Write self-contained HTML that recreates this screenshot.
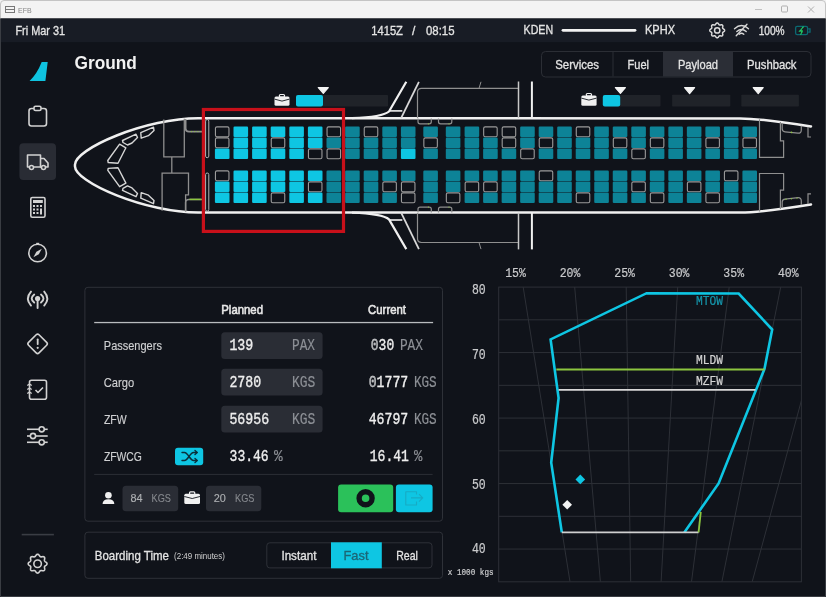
<!DOCTYPE html>
<html><head><meta charset="utf-8"><style>
html,body{margin:0;padding:0;background:#10131a;}
svg{display:block;}
</style></head><body>
<svg style="will-change:transform" width="826" height="597" viewBox="0 0 826 597">
<rect x="0" y="0" width="826" height="597" fill="#10131a"/>
<rect x="0" y="0" width="826" height="18.5" fill="#f3f3f3"/>
<rect x="1" y="18.5" width="824" height="23.7" fill="#181c25"/>
<path d="M0.5,18.5 V4 Q0.5,0.5 4,0.5 H822 Q825.5,0.5 825.5,4 V18.5" fill="none" stroke="#c4c4c4" stroke-width="1"/>
<path d="M0.5,18.5 V596.5 H825.5 V18.5" fill="none" stroke="#3a3d43" stroke-width="1"/>
<g stroke="#777" stroke-width="1" fill="none"><rect x="5.5" y="6.5" width="9" height="6"/><line x1="5.5" y1="9.5" x2="14.5" y2="9.5"/></g>
<text x="18" y="12.5" font-family="'Liberation Sans', sans-serif" font-size="7" font-weight="normal" fill="#888" text-anchor="start" >EFB</text>
<line x1="755" y1="9.5" x2="762" y2="9.5" stroke="#b4b4b4" stroke-width="0.8"/>
<rect x="781.5" y="6" width="6" height="6" fill="none" stroke="#a8a8a8" stroke-width="0.9" rx="1"/>
<path d="M808 6.5 L814 12.5 M814 6.5 L808 12.5" stroke="#a8a8a8" stroke-width="0.9"/>
<text x="15.4" y="34.5" font-family="'Liberation Sans', sans-serif" font-size="12.1" font-weight="normal" fill="#e4e4e4" stroke="#e4e4e4" stroke-width="0.3" text-anchor="start" textLength="49.8" lengthAdjust="spacingAndGlyphs" >Fri Mar 31</text>
<text x="371.3" y="34.6" font-family="'Liberation Sans', sans-serif" font-size="12.1" font-weight="normal" fill="#e4e4e4" stroke="#e4e4e4" stroke-width="0.3" text-anchor="start" textLength="31.6" lengthAdjust="spacingAndGlyphs" >1415Z</text>
<text x="412.0" y="34.6" font-family="'Liberation Sans', sans-serif" font-size="12.1" font-weight="normal" fill="#e4e4e4" stroke="#e4e4e4" stroke-width="0.3" text-anchor="start" >/</text>
<text x="426" y="34.6" font-family="'Liberation Sans', sans-serif" font-size="12.1" font-weight="normal" fill="#e4e4e4" stroke="#e4e4e4" stroke-width="0.3" text-anchor="start" textLength="28.5" lengthAdjust="spacingAndGlyphs" >08:15</text>
<text x="523.6" y="34.3" font-family="'Liberation Sans', sans-serif" font-size="12.1" font-weight="normal" fill="#e4e4e4" stroke="#e4e4e4" stroke-width="0.3" text-anchor="start" textLength="29.5" lengthAdjust="spacingAndGlyphs" >KDEN</text>
<line x1="563" y1="30.3" x2="635" y2="30.3" stroke="#f2f2f2" stroke-width="2.8" stroke-linecap="round"/>
<text x="645" y="34.3" font-family="'Liberation Sans', sans-serif" font-size="12.1" font-weight="normal" fill="#e4e4e4" stroke="#e4e4e4" stroke-width="0.3" text-anchor="start" textLength="30" lengthAdjust="spacingAndGlyphs" >KPHX</text>
<path d="M724.60,30.40 L724.57,30.69 L724.46,30.97 L724.28,31.24 L724.03,31.48 L723.73,31.70 L723.43,31.90 L723.16,32.08 L722.94,32.27 L722.78,32.46 L722.67,32.67 L722.60,32.89 L722.58,33.14 L722.60,33.43 L722.66,33.75 L722.74,34.10 L722.79,34.46 L722.80,34.81 L722.74,35.13 L722.61,35.40 L722.43,35.63 L722.20,35.81 L721.93,35.94 L721.61,36.00 L721.26,35.99 L720.90,35.94 L720.55,35.86 L720.23,35.80 L719.94,35.78 L719.69,35.80 L719.47,35.87 L719.26,35.98 L719.07,36.14 L718.88,36.36 L718.70,36.63 L718.50,36.93 L718.28,37.23 L718.04,37.48 L717.77,37.66 L717.49,37.77 L717.20,37.80 L716.91,37.77 L716.63,37.66 L716.36,37.48 L716.12,37.23 L715.90,36.93 L715.70,36.63 L715.52,36.36 L715.33,36.14 L715.14,35.98 L714.93,35.87 L714.71,35.80 L714.46,35.78 L714.17,35.80 L713.85,35.86 L713.50,35.94 L713.14,35.99 L712.79,36.00 L712.47,35.94 L712.20,35.81 L711.97,35.63 L711.79,35.40 L711.66,35.13 L711.60,34.81 L711.61,34.46 L711.66,34.10 L711.74,33.75 L711.80,33.43 L711.82,33.14 L711.80,32.89 L711.73,32.67 L711.62,32.46 L711.46,32.27 L711.24,32.08 L710.97,31.90 L710.67,31.70 L710.37,31.48 L710.12,31.24 L709.94,30.97 L709.83,30.69 L709.80,30.40 L709.83,30.11 L709.94,29.83 L710.12,29.56 L710.37,29.32 L710.67,29.10 L710.97,28.90 L711.24,28.72 L711.46,28.53 L711.62,28.34 L711.73,28.13 L711.80,27.91 L711.82,27.66 L711.80,27.37 L711.74,27.05 L711.66,26.70 L711.61,26.34 L711.60,25.99 L711.66,25.67 L711.79,25.40 L711.97,25.17 L712.20,24.99 L712.47,24.86 L712.79,24.80 L713.14,24.81 L713.50,24.86 L713.85,24.94 L714.17,25.00 L714.46,25.02 L714.71,25.00 L714.93,24.93 L715.14,24.82 L715.33,24.66 L715.52,24.44 L715.70,24.17 L715.90,23.87 L716.12,23.57 L716.36,23.32 L716.63,23.14 L716.91,23.03 L717.20,23.00 L717.49,23.03 L717.77,23.14 L718.04,23.32 L718.28,23.57 L718.50,23.87 L718.70,24.17 L718.88,24.44 L719.07,24.66 L719.26,24.82 L719.47,24.93 L719.69,25.00 L719.94,25.02 L720.23,25.00 L720.55,24.94 L720.90,24.86 L721.26,24.81 L721.61,24.80 L721.93,24.86 L722.20,24.99 L722.43,25.17 L722.61,25.40 L722.74,25.67 L722.80,25.99 L722.79,26.34 L722.74,26.70 L722.66,27.05 L722.60,27.37 L722.58,27.66 L722.60,27.91 L722.67,28.13 L722.78,28.34 L722.94,28.53 L723.16,28.72 L723.43,28.90 L723.73,29.10 L724.03,29.32 L724.28,29.56 L724.46,29.83 L724.57,30.11Z" fill="none" stroke="#dcdcdc" stroke-width="1.5" stroke-linejoin="round"/>
<circle cx="717.2" cy="30.4" r="2.66" fill="none" stroke="#dcdcdc" stroke-width="1.5"/>
<g fill="none" stroke="#d8d8d8" stroke-width="1.35" stroke-linecap="round"><path d="M734.5,28.8 Q741.5,22.3 748.5,28.8"/><path d="M736.8,31.6 Q741.5,27.4 746.2,31.6"/><path d="M739.2,34.3 Q741.5,32.2 743.8,34.3"/><line x1="736.2" y1="35.8" x2="747" y2="24.3"/></g>
<text x="758.7" y="34.6" font-family="'Liberation Sans', sans-serif" font-size="12.1" font-weight="normal" fill="#e4e4e4" stroke="#e4e4e4" stroke-width="0.3" text-anchor="start" textLength="25.9" lengthAdjust="spacingAndGlyphs" >100%</text>
<g fill="none" stroke="#0b6a73" stroke-width="1.3"><rect x="795.6" y="26.3" width="12" height="8.4" rx="1.6"/><path d="M808.2,28.8 h1.8 v3.4 h-1.8"/></g>
<path d="M803.2,27 L799.8,31 L802.5,31 L800.8,34.2" stroke="#1fcf63" stroke-width="1.3" fill="none" stroke-linecap="round" stroke-dasharray="1.2 1"/>
<path d="M41.7,62 L47.7,62 L45.4,80.9 L29.6,80.9 Q37,74 41.7,62 Z" fill="#0fc3e0"/>
<g fill="none" stroke="#d2d2d2" stroke-width="1.6" stroke-linejoin="round"><rect x="29" y="108.5" width="17.5" height="17.5" rx="2.5"/><rect x="34" y="106.3" width="7" height="4.2" rx="1.5" fill="#10131a"/></g>
<rect x="19.4" y="143.3" width="36.6" height="36.7" rx="4" fill="#292c34"/>
<g fill="none" stroke="#d2d2d2" stroke-width="1.6" stroke-linejoin="round"><path d="M27.5 155 h13 v12 h-13 z"/><path d="M40.5 158.5 h3.5 l4 4.5 v4 h-8"/><circle cx="31.5" cy="167.5" r="2" fill="#292c34"/><circle cx="43.5" cy="167.5" r="2" fill="#292c34"/></g>
<g fill="none" stroke="#d2d2d2" stroke-width="1.6"><rect x="30.8" y="197.5" width="14.2" height="19.7" rx="1.5"/></g>
<g fill="#d2d2d2"><rect x="33" y="200" width="9.8" height="3"/><rect x="33" y="205" width="2" height="2"/><rect x="36.5" y="205" width="2" height="2"/><rect x="40" y="205" width="2" height="2"/><rect x="33" y="208.5" width="2" height="2"/><rect x="36.5" y="208.5" width="2" height="2"/><rect x="40" y="208.5" width="2" height="6"/><rect x="33" y="212" width="2" height="2"/><rect x="36.5" y="212" width="2" height="2"/></g>
<circle cx="37.6" cy="253" r="8.8" fill="none" stroke="#d2d2d2" stroke-width="1.6"/>
<path d="M41.8 248.8 L38.8 254.2 L33.4 257.2 L36.4 251.8 Z" fill="#d2d2d2"/>
<rect x="36.2" y="242.8" width="3" height="1.5" fill="#d2d2d2"/>
<g fill="none" stroke="#d2d2d2" stroke-width="1.9" stroke-linecap="round"><path d="M31,291.6 Q24.8,298.6 31,305.6"/><path d="M44.2,291.6 Q50.4,298.6 44.2,305.6"/><path d="M34.2,294.6 Q29.2,298.6 34.2,302.6"/><path d="M41,294.6 Q46,298.6 41,302.6"/><line x1="37.6" y1="300" x2="37.6" y2="308"/></g><circle cx="37.6" cy="298.6" r="2.6" fill="#d2d2d2"/>
<rect x="30.2" y="336.4" width="14.8" height="14.8" rx="2" transform="rotate(45 37.6 343.8)" fill="none" stroke="#d2d2d2" stroke-width="1.6"/>
<rect x="36.8" y="338.5" width="1.8" height="6.5" rx="0.8" fill="#d2d2d2"/><circle cx="37.7" cy="347.8" r="1.1" fill="#d2d2d2"/>
<g fill="none" stroke="#d2d2d2" stroke-width="1.6" stroke-linejoin="round"><rect x="29.5" y="380.3" width="17" height="19" rx="2"/><path d="M35.5 390 l2.5 2.5 l5 -5"/></g>
<g stroke="#d2d2d2" stroke-width="1.4" fill="none"><path d="M27.3 385.5 l2.2 -1.5 l2.2 1.5"/><path d="M27.3 389.5 l2.2 -1.5 l2.2 1.5"/><path d="M27.3 393.5 l2.2 -1.5 l2.2 1.5"/></g>
<g stroke="#d2d2d2" stroke-width="1.6" fill="none"><line x1="27" y1="429.3" x2="47.7" y2="429.3"/><line x1="27" y1="436" x2="47.7" y2="436"/><line x1="27" y1="442.3" x2="47.7" y2="442.3"/></g>
<g stroke="#d2d2d2" stroke-width="1.6" fill="#10131a"><circle cx="41.7" cy="429.3" r="2.6"/><circle cx="33" cy="436" r="2.6"/><circle cx="41.7" cy="442.3" r="2.6"/></g>
<rect x="21.7" y="533.8" width="32.2" height="1.6" fill="#3a3d44"/>
<path d="M47.00,563.70 L46.96,564.07 L46.82,564.43 L46.59,564.76 L46.27,565.07 L45.90,565.35 L45.51,565.60 L45.17,565.84 L44.90,566.07 L44.69,566.32 L44.55,566.58 L44.46,566.86 L44.44,567.18 L44.46,567.54 L44.54,567.95 L44.63,568.40 L44.70,568.86 L44.71,569.30 L44.63,569.71 L44.48,570.06 L44.25,570.35 L43.96,570.58 L43.61,570.73 L43.20,570.81 L42.76,570.80 L42.30,570.73 L41.85,570.64 L41.44,570.56 L41.08,570.54 L40.76,570.56 L40.48,570.65 L40.22,570.79 L39.97,571.00 L39.74,571.27 L39.50,571.61 L39.25,572.00 L38.97,572.37 L38.66,572.69 L38.33,572.92 L37.97,573.06 L37.60,573.10 L37.23,573.06 L36.87,572.92 L36.54,572.69 L36.23,572.37 L35.95,572.00 L35.70,571.61 L35.46,571.27 L35.23,571.00 L34.98,570.79 L34.72,570.65 L34.44,570.56 L34.12,570.54 L33.76,570.56 L33.35,570.64 L32.90,570.73 L32.44,570.80 L32.00,570.81 L31.59,570.73 L31.24,570.58 L30.95,570.35 L30.72,570.06 L30.57,569.71 L30.49,569.30 L30.50,568.86 L30.57,568.40 L30.66,567.95 L30.74,567.54 L30.76,567.18 L30.74,566.86 L30.65,566.58 L30.51,566.32 L30.30,566.07 L30.03,565.84 L29.69,565.60 L29.30,565.35 L28.93,565.07 L28.61,564.76 L28.38,564.43 L28.24,564.07 L28.20,563.70 L28.24,563.33 L28.38,562.97 L28.61,562.64 L28.93,562.33 L29.30,562.05 L29.69,561.80 L30.03,561.56 L30.30,561.33 L30.51,561.08 L30.65,560.82 L30.74,560.54 L30.76,560.22 L30.74,559.86 L30.66,559.45 L30.57,559.00 L30.50,558.54 L30.49,558.10 L30.57,557.69 L30.72,557.34 L30.95,557.05 L31.24,556.82 L31.59,556.67 L32.00,556.59 L32.44,556.60 L32.90,556.67 L33.35,556.76 L33.76,556.84 L34.12,556.86 L34.44,556.84 L34.72,556.75 L34.98,556.61 L35.23,556.40 L35.46,556.13 L35.70,555.79 L35.95,555.40 L36.23,555.03 L36.54,554.71 L36.87,554.48 L37.23,554.34 L37.60,554.30 L37.97,554.34 L38.33,554.48 L38.66,554.71 L38.97,555.03 L39.25,555.40 L39.50,555.79 L39.74,556.13 L39.97,556.40 L40.22,556.61 L40.48,556.75 L40.76,556.84 L41.08,556.86 L41.44,556.84 L41.85,556.76 L42.30,556.67 L42.76,556.60 L43.20,556.59 L43.61,556.67 L43.96,556.82 L44.25,557.05 L44.48,557.34 L44.63,557.69 L44.71,558.10 L44.70,558.54 L44.63,559.00 L44.54,559.45 L44.46,559.86 L44.44,560.22 L44.46,560.54 L44.55,560.82 L44.69,561.08 L44.90,561.33 L45.17,561.56 L45.51,561.80 L45.90,562.05 L46.27,562.33 L46.59,562.64 L46.82,562.97 L46.96,563.33Z" fill="none" stroke="#d2d2d2" stroke-width="1.6" stroke-linejoin="round"/>
<circle cx="37.6" cy="563.7" r="3.76" fill="none" stroke="#d2d2d2" stroke-width="1.6"/>
<text x="74.5" y="68.6" font-family="'Liberation Sans', sans-serif" font-size="18" font-weight="bold" fill="#f2f2f2" text-anchor="start" textLength="62.4" lengthAdjust="spacingAndGlyphs" >Ground</text>
<rect x="541.5" y="51.5" width="269.5" height="25.5" rx="4" fill="none" stroke="#2b2e35" stroke-width="1"/>
<rect x="663" y="52" width="70" height="24.5" fill="#2b2e36"/>
<line x1="613" y1="52" x2="613" y2="76.5" stroke="#2b2e35" stroke-width="1"/>
<text x="555.2" y="68.7" font-family="'Liberation Sans', sans-serif" font-size="12.2" font-weight="normal" fill="#e3e3e3" stroke="#e3e3e3" stroke-width="0.3" text-anchor="start" textLength="43.8" lengthAdjust="spacingAndGlyphs" >Services</text>
<text x="627.5" y="68.7" font-family="'Liberation Sans', sans-serif" font-size="12.2" font-weight="normal" fill="#e3e3e3" stroke="#e3e3e3" stroke-width="0.3" text-anchor="start" textLength="21.5" lengthAdjust="spacingAndGlyphs" >Fuel</text>
<text x="677.9" y="68.7" font-family="'Liberation Sans', sans-serif" font-size="12.2" font-weight="normal" fill="#e3e3e3" stroke="#e3e3e3" stroke-width="0.3" text-anchor="start" textLength="40.1" lengthAdjust="spacingAndGlyphs" >Payload</text>
<text x="747" y="68.7" font-family="'Liberation Sans', sans-serif" font-size="12.2" font-weight="normal" fill="#e3e3e3" stroke="#e3e3e3" stroke-width="0.3" text-anchor="start" textLength="49.5" lengthAdjust="spacingAndGlyphs" >Pushback</text>
<path d="M811,126.4 Q762,118.5 740,118.4 L200,118.3 C146.6,117.6 73,149.2 75,165.45 C73,181.7 146.6,213.3 200,212.6 L740,212.5 Q762,212.4 811,204.5" fill="none" stroke="#f0f0f0" stroke-width="2.5" stroke-linecap="round"/>
<path d="M140.8,132.7 L153.5,127.2 L154,130.5 L148.4,135.7 L141.2,138.2Z" fill="none" stroke="#d6d6d6" stroke-width="1.4" stroke-linejoin="round"/>
<path d="M140.8,198.20 L153.5,203.70 L154,200.40 L148.4,195.20 L141.2,192.70Z" fill="none" stroke="#d6d6d6" stroke-width="1.4" stroke-linejoin="round"/>
<path d="M122.5,140.5 L136,134.2 L137.5,137.5 L132,143 L127.5,145 L123,142.5Z" fill="none" stroke="#d6d6d6" stroke-width="1.4" stroke-linejoin="round"/>
<path d="M122.5,190.40 L136,196.70 L137.5,193.40 L132,187.90 L127.5,185.90 L123,188.40Z" fill="none" stroke="#d6d6d6" stroke-width="1.4" stroke-linejoin="round"/>
<path d="M119.6,144.2 L125.9,147.8 L118,163.2 L108.2,162.5 L107.8,160.5Z" fill="none" stroke="#d6d6d6" stroke-width="1.4" stroke-linejoin="round"/>
<path d="M119.6,186.70 L125.9,183.10 L118,167.70 L108.2,168.40 L107.8,170.40Z" fill="none" stroke="#d6d6d6" stroke-width="1.4" stroke-linejoin="round"/>
<g fill="none" stroke="#8f8f8f" stroke-width="1.3"><path d="M163.8,119.5 V156.9 H184.3 V118.8"/><line x1="171.8" y1="156.9" x2="171.8" y2="173.1"/><path d="M162.1,210.8 V173.1 H188.5 V194.8 H185.6 V211.6"/></g>
<path d="M185.6,119 V128.5 Q185.6,131.6 189,131.6 H202" fill="none" stroke="#8f8f8f" stroke-width="1.8"/>
<line x1="191" y1="131.6" x2="201" y2="131.6" stroke="#8cc63f" stroke-width="1" stroke-dasharray="1 2.2"/>
<path d="M185.6,211.5 V202.5 Q185.6,199.4 189,199.4 H202" fill="none" stroke="#8f8f8f" stroke-width="1.5"/>
<line x1="189.5" y1="199.4" x2="201.5" y2="199.4" stroke="#8cc63f" stroke-width="1.5"/>
<rect x="205.6" y="119.5" width="3.2" height="38.2" rx="1.6" fill="none" stroke="#b5b5b5" stroke-width="1"/>
<rect x="205.6" y="173" width="3.2" height="38.2" rx="1.6" fill="none" stroke="#b5b5b5" stroke-width="1"/>
<path d="M352,118.2 C370,117.5 385,115 389,111.5 L406.3,81.8" fill="none" stroke="#f0f0f0" stroke-width="2.2" stroke-linejoin="round"/>
<line x1="389" y1="110.9" x2="402.3" y2="110.9" stroke="#f0f0f0" stroke-width="1.6"/>
<line x1="401.1" y1="118.2" x2="418.9" y2="81.8" stroke="#d8d8d8" stroke-width="1.8"/>
<path d="M417.5,118 V92.3 Q417.5,88.4 421.5,88.4 H518.5" fill="none" stroke="#8f8f8f" stroke-width="1.2"/>
<line x1="479" y1="88.4" x2="481" y2="81.8" stroke="#8f8f8f" stroke-width="1"/>
<line x1="518.5" y1="81.5" x2="518.5" y2="118.2" stroke="#c8c8c8" stroke-width="1.5"/>
<line x1="531.9" y1="81.5" x2="531.9" y2="118.2" stroke="#f0f0f0" stroke-width="2"/>
<path d="M418,118.5 V121.80 Q418,123.8 420,123.8 H429.3 Q431.3,123.8 431.3,121.80 V118.5" fill="none" stroke="#8f8f8f" stroke-width="1.2" stroke-linejoin="round"/>
<circle cx="428.5" cy="123.8" r="0.6" fill="#8cc63f"/>
<path d="M438.5,118.5 V121.80 Q438.5,123.8 440.5,123.8 H449.8 Q451.8,123.8 451.8,121.80 V118.5" fill="none" stroke="#8f8f8f" stroke-width="1.2" stroke-linejoin="round"/>
<circle cx="449.0" cy="123.8" r="0.6" fill="#8cc63f"/>
<path d="M352,212.7 C370,213.39999999999998 385,215.89999999999998 389,219.39999999999998 L406.3,249.09999999999997" fill="none" stroke="#f0f0f0" stroke-width="2.2" stroke-linejoin="round"/>
<line x1="389" y1="219.99999999999997" x2="402.3" y2="219.99999999999997" stroke="#f0f0f0" stroke-width="1.6"/>
<line x1="401.1" y1="212.7" x2="418.9" y2="249.09999999999997" stroke="#d8d8d8" stroke-width="1.8"/>
<path d="M417.5,212.89999999999998 V238.59999999999997 Q417.5,242.49999999999997 421.5,242.49999999999997 H518.5" fill="none" stroke="#8f8f8f" stroke-width="1.2"/>
<line x1="479" y1="242.49999999999997" x2="481" y2="249.09999999999997" stroke="#8f8f8f" stroke-width="1"/>
<line x1="518.5" y1="249.39999999999998" x2="518.5" y2="212.7" stroke="#c8c8c8" stroke-width="1.5"/>
<line x1="531.9" y1="249.39999999999998" x2="531.9" y2="212.7" stroke="#f0f0f0" stroke-width="2"/>
<path d="M418,212.39999999999998 V209.10 Q418,207.09999999999997 420,207.09999999999997 H429.3 Q431.3,207.09999999999997 431.3,209.10 V212.39999999999998" fill="none" stroke="#8f8f8f" stroke-width="1.2" stroke-linejoin="round"/>
<circle cx="428.5" cy="207.09999999999997" r="0.6" fill="#8cc63f"/>
<path d="M438.5,212.39999999999998 V209.10 Q438.5,207.09999999999997 440.5,207.09999999999997 H449.8 Q451.8,207.09999999999997 451.8,209.10 V212.39999999999998" fill="none" stroke="#8f8f8f" stroke-width="1.2" stroke-linejoin="round"/>
<circle cx="449.0" cy="207.09999999999997" r="0.6" fill="#8cc63f"/>
<g fill="none" stroke="#8f8f8f" stroke-width="1.2"><path d="M759.5,119.3 V157.4 H783.6 V140.8 H780.4 V122"/><path d="M759.5,211.6 V173.5 H783.6 V190.1 H780.4 V208.9"/><path d="M782.2,123 V129 Q782.2,131.5 785,131.8 L798,133.2 Q801.3,133.3 801.3,130 V125.8"/><path d="M782.2,207.9 V201.9 Q782.2,199.4 785,199.1 L798,197.7 Q801.3,197.6 801.3,200.9 V205.1"/><path d="M808,127 V137 H811"/><path d="M808,203.9 V193.9 H811"/></g>
<circle cx="791.5" cy="132.4" r="0.8" fill="#8cc63f"/>
<g fill="#8cc63f"><circle cx="786" cy="199.3" r="0.7"/><circle cx="791.5" cy="198.7" r="0.7"/><circle cx="797" cy="198.1" r="0.7"/></g>
<rect x="215.45" y="126.85" width="13.5" height="9.9" rx="1.5" fill="none" stroke="#9b9b9b" stroke-width="1.1"/>
<rect x="215.45" y="137.85" width="13.5" height="9.9" rx="1.5" fill="none" stroke="#9b9b9b" stroke-width="1.1"/>
<rect x="214.90" y="148.55" width="14.6" height="10.5" rx="1.1" fill="#0ec6e3"/>
<rect x="215.45" y="170.85" width="13.5" height="9.9" rx="1.5" fill="none" stroke="#9b9b9b" stroke-width="1.1"/>
<rect x="214.90" y="181.55" width="14.6" height="10.5" rx="1.1" fill="#0ec6e3"/>
<rect x="214.90" y="192.55" width="14.6" height="10.5" rx="1.1" fill="#0ec6e3"/>
<rect x="233.50" y="126.55" width="14.6" height="10.5" rx="1.1" fill="#0ec6e3"/>
<rect x="233.50" y="137.55" width="14.6" height="10.5" rx="1.1" fill="#0ec6e3"/>
<rect x="233.50" y="148.55" width="14.6" height="10.5" rx="1.1" fill="#0ec6e3"/>
<rect x="233.50" y="170.55" width="14.6" height="10.5" rx="1.1" fill="#0ec6e3"/>
<rect x="233.50" y="181.55" width="14.6" height="10.5" rx="1.1" fill="#0ec6e3"/>
<rect x="233.50" y="192.55" width="14.6" height="10.5" rx="1.1" fill="#0ec6e3"/>
<rect x="252.10" y="126.55" width="14.6" height="10.5" rx="1.1" fill="#0ec6e3"/>
<rect x="252.10" y="137.55" width="14.6" height="10.5" rx="1.1" fill="#0ec6e3"/>
<rect x="252.10" y="148.55" width="14.6" height="10.5" rx="1.1" fill="#0ec6e3"/>
<rect x="252.10" y="170.55" width="14.6" height="10.5" rx="1.1" fill="#0ec6e3"/>
<rect x="252.10" y="181.55" width="14.6" height="10.5" rx="1.1" fill="#0ec6e3"/>
<rect x="252.10" y="192.55" width="14.6" height="10.5" rx="1.1" fill="#0ec6e3"/>
<rect x="270.70" y="126.55" width="14.6" height="10.5" rx="1.1" fill="#0ec6e3"/>
<rect x="271.25" y="137.85" width="13.5" height="9.9" rx="1.5" fill="none" stroke="#9b9b9b" stroke-width="1.1"/>
<rect x="270.70" y="148.55" width="14.6" height="10.5" rx="1.1" fill="#0ec6e3"/>
<rect x="270.70" y="170.55" width="14.6" height="10.5" rx="1.1" fill="#0ec6e3"/>
<rect x="270.70" y="181.55" width="14.6" height="10.5" rx="1.1" fill="#0ec6e3"/>
<rect x="271.25" y="192.85" width="13.5" height="9.9" rx="1.5" fill="none" stroke="#9b9b9b" stroke-width="1.1"/>
<rect x="289.30" y="126.55" width="14.6" height="10.5" rx="1.1" fill="#0ec6e3"/>
<rect x="289.30" y="137.55" width="14.6" height="10.5" rx="1.1" fill="#0ec6e3"/>
<rect x="289.30" y="148.55" width="14.6" height="10.5" rx="1.1" fill="#0ec6e3"/>
<rect x="289.30" y="170.55" width="14.6" height="10.5" rx="1.1" fill="#0ec6e3"/>
<rect x="289.30" y="181.55" width="14.6" height="10.5" rx="1.1" fill="#0ec6e3"/>
<rect x="289.30" y="192.55" width="14.6" height="10.5" rx="1.1" fill="#0ec6e3"/>
<rect x="307.90" y="126.55" width="14.6" height="10.5" rx="1.1" fill="#0ec6e3"/>
<rect x="307.90" y="137.55" width="14.6" height="10.5" rx="1.1" fill="#0ec6e3"/>
<rect x="308.45" y="148.85" width="13.5" height="9.9" rx="1.5" fill="none" stroke="#9b9b9b" stroke-width="1.1"/>
<rect x="307.90" y="170.55" width="14.6" height="10.5" rx="1.1" fill="#0ec6e3"/>
<rect x="308.45" y="181.85" width="13.5" height="9.9" rx="1.5" fill="none" stroke="#9b9b9b" stroke-width="1.1"/>
<rect x="307.90" y="192.55" width="14.6" height="10.5" rx="1.1" fill="#0ec6e3"/>
<rect x="327.05" y="126.85" width="13.5" height="9.9" rx="1.5" fill="none" stroke="#9b9b9b" stroke-width="1.1"/>
<rect x="326.50" y="137.55" width="14.6" height="10.5" rx="1.1" fill="#0d8397"/>
<rect x="327.05" y="148.85" width="13.5" height="9.9" rx="1.5" fill="none" stroke="#9b9b9b" stroke-width="1.1"/>
<rect x="326.50" y="170.55" width="14.6" height="10.5" rx="1.1" fill="#0d8397"/>
<rect x="326.50" y="181.55" width="14.6" height="10.5" rx="1.1" fill="#0d8397"/>
<rect x="326.50" y="192.55" width="14.6" height="10.5" rx="1.1" fill="#0d8397"/>
<rect x="345.10" y="126.55" width="14.6" height="10.5" rx="1.1" fill="#0d8397"/>
<rect x="345.10" y="137.55" width="14.6" height="10.5" rx="1.1" fill="#0d8397"/>
<rect x="345.10" y="148.55" width="14.6" height="10.5" rx="1.1" fill="#0d8397"/>
<rect x="345.10" y="170.55" width="14.6" height="10.5" rx="1.1" fill="#0d8397"/>
<rect x="345.10" y="181.55" width="14.6" height="10.5" rx="1.1" fill="#0d8397"/>
<rect x="345.10" y="192.55" width="14.6" height="10.5" rx="1.1" fill="#0d8397"/>
<rect x="364.25" y="126.85" width="13.5" height="9.9" rx="1.5" fill="none" stroke="#9b9b9b" stroke-width="1.1"/>
<rect x="363.70" y="137.55" width="14.6" height="10.5" rx="1.1" fill="#0d8397"/>
<rect x="363.70" y="148.55" width="14.6" height="10.5" rx="1.1" fill="#0d8397"/>
<rect x="363.70" y="170.55" width="14.6" height="10.5" rx="1.1" fill="#0d8397"/>
<rect x="363.70" y="181.55" width="14.6" height="10.5" rx="1.1" fill="#0d8397"/>
<rect x="363.70" y="192.55" width="14.6" height="10.5" rx="1.1" fill="#0d8397"/>
<rect x="382.30" y="126.55" width="14.6" height="10.5" rx="1.1" fill="#0d8397"/>
<rect x="382.30" y="137.55" width="14.6" height="10.5" rx="1.1" fill="#0d8397"/>
<rect x="382.30" y="148.55" width="14.6" height="10.5" rx="1.1" fill="#0d8397"/>
<rect x="382.30" y="170.55" width="14.6" height="10.5" rx="1.1" fill="#0d8397"/>
<rect x="382.85" y="181.85" width="13.5" height="9.9" rx="1.5" fill="none" stroke="#9b9b9b" stroke-width="1.1"/>
<rect x="382.30" y="192.55" width="14.6" height="10.5" rx="1.1" fill="#0d8397"/>
<rect x="400.90" y="126.55" width="14.6" height="10.5" rx="1.1" fill="#0d8397"/>
<rect x="400.90" y="137.55" width="14.6" height="10.5" rx="1.1" fill="#0d8397"/>
<rect x="400.90" y="148.55" width="14.6" height="10.5" rx="1.1" fill="#0ec6e3"/>
<rect x="400.90" y="170.55" width="14.6" height="10.5" rx="1.1" fill="#0d8397"/>
<rect x="401.45" y="181.85" width="13.5" height="9.9" rx="1.5" fill="none" stroke="#9b9b9b" stroke-width="1.1"/>
<rect x="401.45" y="192.85" width="13.5" height="9.9" rx="1.5" fill="none" stroke="#9b9b9b" stroke-width="1.1"/>
<rect x="423.30" y="126.55" width="14.6" height="10.5" rx="1.1" fill="#0d8397"/>
<rect x="423.85" y="137.85" width="13.5" height="9.9" rx="1.5" fill="none" stroke="#9b9b9b" stroke-width="1.1"/>
<rect x="423.30" y="148.55" width="14.6" height="10.5" rx="1.1" fill="#0d8397"/>
<rect x="423.30" y="170.55" width="14.6" height="10.5" rx="1.1" fill="#0d8397"/>
<rect x="423.30" y="181.55" width="14.6" height="10.5" rx="1.1" fill="#0d8397"/>
<rect x="423.30" y="192.55" width="14.6" height="10.5" rx="1.1" fill="#0d8397"/>
<rect x="445.80" y="126.55" width="14.6" height="10.5" rx="1.1" fill="#0d8397"/>
<rect x="445.80" y="137.55" width="14.6" height="10.5" rx="1.1" fill="#0d8397"/>
<rect x="445.80" y="148.55" width="14.6" height="10.5" rx="1.1" fill="#0d8397"/>
<rect x="445.80" y="170.55" width="14.6" height="10.5" rx="1.1" fill="#0d8397"/>
<rect x="445.80" y="181.55" width="14.6" height="10.5" rx="1.1" fill="#0d8397"/>
<rect x="446.35" y="192.85" width="13.5" height="9.9" rx="1.5" fill="none" stroke="#9b9b9b" stroke-width="1.1"/>
<rect x="464.60" y="126.55" width="14.6" height="10.5" rx="1.1" fill="#0d8397"/>
<rect x="464.60" y="137.55" width="14.6" height="10.5" rx="1.1" fill="#0d8397"/>
<rect x="464.60" y="148.55" width="14.6" height="10.5" rx="1.1" fill="#0d8397"/>
<rect x="464.60" y="170.55" width="14.6" height="10.5" rx="1.1" fill="#0d8397"/>
<rect x="465.15" y="181.85" width="13.5" height="9.9" rx="1.5" fill="none" stroke="#9b9b9b" stroke-width="1.1"/>
<rect x="464.60" y="192.55" width="14.6" height="10.5" rx="1.1" fill="#0d8397"/>
<rect x="483.67" y="126.85" width="13.5" height="9.9" rx="1.5" fill="none" stroke="#9b9b9b" stroke-width="1.1"/>
<rect x="483.12" y="137.55" width="14.6" height="10.5" rx="1.1" fill="#0d8397"/>
<rect x="483.12" y="148.55" width="14.6" height="10.5" rx="1.1" fill="#0d8397"/>
<rect x="483.12" y="170.55" width="14.6" height="10.5" rx="1.1" fill="#0d8397"/>
<rect x="483.67" y="181.85" width="13.5" height="9.9" rx="1.5" fill="none" stroke="#9b9b9b" stroke-width="1.1"/>
<rect x="483.12" y="192.55" width="14.6" height="10.5" rx="1.1" fill="#0d8397"/>
<rect x="502.19" y="126.85" width="13.5" height="9.9" rx="1.5" fill="none" stroke="#9b9b9b" stroke-width="1.1"/>
<rect x="502.19" y="137.85" width="13.5" height="9.9" rx="1.5" fill="none" stroke="#9b9b9b" stroke-width="1.1"/>
<rect x="501.64" y="148.55" width="14.6" height="10.5" rx="1.1" fill="#0d8397"/>
<rect x="501.64" y="170.55" width="14.6" height="10.5" rx="1.1" fill="#0d8397"/>
<rect x="501.64" y="181.55" width="14.6" height="10.5" rx="1.1" fill="#0d8397"/>
<rect x="501.64" y="192.55" width="14.6" height="10.5" rx="1.1" fill="#0d8397"/>
<rect x="520.16" y="126.55" width="14.6" height="10.5" rx="1.1" fill="#0d8397"/>
<rect x="520.16" y="137.55" width="14.6" height="10.5" rx="1.1" fill="#0d8397"/>
<rect x="520.71" y="148.85" width="13.5" height="9.9" rx="1.5" fill="none" stroke="#9b9b9b" stroke-width="1.1"/>
<rect x="520.16" y="170.55" width="14.6" height="10.5" rx="1.1" fill="#0d8397"/>
<rect x="520.16" y="181.55" width="14.6" height="10.5" rx="1.1" fill="#0d8397"/>
<rect x="520.16" y="192.55" width="14.6" height="10.5" rx="1.1" fill="#0d8397"/>
<rect x="538.68" y="126.55" width="14.6" height="10.5" rx="1.1" fill="#0d8397"/>
<rect x="539.23" y="137.85" width="13.5" height="9.9" rx="1.5" fill="none" stroke="#9b9b9b" stroke-width="1.1"/>
<rect x="538.68" y="148.55" width="14.6" height="10.5" rx="1.1" fill="#0d8397"/>
<rect x="539.23" y="170.85" width="13.5" height="9.9" rx="1.5" fill="none" stroke="#9b9b9b" stroke-width="1.1"/>
<rect x="538.68" y="181.55" width="14.6" height="10.5" rx="1.1" fill="#0d8397"/>
<rect x="538.68" y="192.55" width="14.6" height="10.5" rx="1.1" fill="#0d8397"/>
<rect x="557.20" y="126.55" width="14.6" height="10.5" rx="1.1" fill="#0d8397"/>
<rect x="557.20" y="137.55" width="14.6" height="10.5" rx="1.1" fill="#0d8397"/>
<rect x="557.20" y="148.55" width="14.6" height="10.5" rx="1.1" fill="#0d8397"/>
<rect x="557.20" y="170.55" width="14.6" height="10.5" rx="1.1" fill="#0d8397"/>
<rect x="557.20" y="181.55" width="14.6" height="10.5" rx="1.1" fill="#0d8397"/>
<rect x="557.20" y="192.55" width="14.6" height="10.5" rx="1.1" fill="#0d8397"/>
<rect x="576.27" y="126.85" width="13.5" height="9.9" rx="1.5" fill="none" stroke="#9b9b9b" stroke-width="1.1"/>
<rect x="575.72" y="137.55" width="14.6" height="10.5" rx="1.1" fill="#0d8397"/>
<rect x="575.72" y="148.55" width="14.6" height="10.5" rx="1.1" fill="#0d8397"/>
<rect x="575.72" y="170.55" width="14.6" height="10.5" rx="1.1" fill="#0d8397"/>
<rect x="575.72" y="181.55" width="14.6" height="10.5" rx="1.1" fill="#0d8397"/>
<rect x="576.27" y="192.85" width="13.5" height="9.9" rx="1.5" fill="none" stroke="#9b9b9b" stroke-width="1.1"/>
<rect x="594.24" y="126.55" width="14.6" height="10.5" rx="1.1" fill="#0d8397"/>
<rect x="594.24" y="137.55" width="14.6" height="10.5" rx="1.1" fill="#0d8397"/>
<rect x="594.24" y="148.55" width="14.6" height="10.5" rx="1.1" fill="#0d8397"/>
<rect x="594.24" y="170.55" width="14.6" height="10.5" rx="1.1" fill="#0d8397"/>
<rect x="594.24" y="181.55" width="14.6" height="10.5" rx="1.1" fill="#0d8397"/>
<rect x="594.24" y="192.55" width="14.6" height="10.5" rx="1.1" fill="#0d8397"/>
<rect x="612.76" y="126.55" width="14.6" height="10.5" rx="1.1" fill="#0d8397"/>
<rect x="613.31" y="137.85" width="13.5" height="9.9" rx="1.5" fill="none" stroke="#9b9b9b" stroke-width="1.1"/>
<rect x="612.76" y="148.55" width="14.6" height="10.5" rx="1.1" fill="#0d8397"/>
<rect x="612.76" y="170.55" width="14.6" height="10.5" rx="1.1" fill="#0d8397"/>
<rect x="612.76" y="181.55" width="14.6" height="10.5" rx="1.1" fill="#0d8397"/>
<rect x="612.76" y="192.55" width="14.6" height="10.5" rx="1.1" fill="#0d8397"/>
<rect x="631.28" y="126.55" width="14.6" height="10.5" rx="1.1" fill="#0d8397"/>
<rect x="631.28" y="137.55" width="14.6" height="10.5" rx="1.1" fill="#0d8397"/>
<rect x="631.83" y="148.85" width="13.5" height="9.9" rx="1.5" fill="none" stroke="#9b9b9b" stroke-width="1.1"/>
<rect x="631.28" y="170.55" width="14.6" height="10.5" rx="1.1" fill="#0d8397"/>
<rect x="631.83" y="181.85" width="13.5" height="9.9" rx="1.5" fill="none" stroke="#9b9b9b" stroke-width="1.1"/>
<rect x="631.28" y="192.55" width="14.6" height="10.5" rx="1.1" fill="#0d8397"/>
<rect x="649.80" y="126.55" width="14.6" height="10.5" rx="1.1" fill="#0d8397"/>
<rect x="650.35" y="137.85" width="13.5" height="9.9" rx="1.5" fill="none" stroke="#9b9b9b" stroke-width="1.1"/>
<rect x="649.80" y="148.55" width="14.6" height="10.5" rx="1.1" fill="#0d8397"/>
<rect x="649.80" y="170.55" width="14.6" height="10.5" rx="1.1" fill="#0d8397"/>
<rect x="649.80" y="181.55" width="14.6" height="10.5" rx="1.1" fill="#0d8397"/>
<rect x="650.35" y="192.85" width="13.5" height="9.9" rx="1.5" fill="none" stroke="#9b9b9b" stroke-width="1.1"/>
<rect x="668.32" y="126.55" width="14.6" height="10.5" rx="1.1" fill="#0d8397"/>
<rect x="668.32" y="137.55" width="14.6" height="10.5" rx="1.1" fill="#0d8397"/>
<rect x="668.32" y="148.55" width="14.6" height="10.5" rx="1.1" fill="#0d8397"/>
<rect x="668.32" y="170.55" width="14.6" height="10.5" rx="1.1" fill="#0d8397"/>
<rect x="668.32" y="181.55" width="14.6" height="10.5" rx="1.1" fill="#0d8397"/>
<rect x="668.32" y="192.55" width="14.6" height="10.5" rx="1.1" fill="#0d8397"/>
<rect x="686.84" y="126.55" width="14.6" height="10.5" rx="1.1" fill="#0d8397"/>
<rect x="686.84" y="137.55" width="14.6" height="10.5" rx="1.1" fill="#0d8397"/>
<rect x="686.84" y="148.55" width="14.6" height="10.5" rx="1.1" fill="#0d8397"/>
<rect x="686.84" y="170.55" width="14.6" height="10.5" rx="1.1" fill="#0d8397"/>
<rect x="687.39" y="181.85" width="13.5" height="9.9" rx="1.5" fill="none" stroke="#9b9b9b" stroke-width="1.1"/>
<rect x="686.84" y="192.55" width="14.6" height="10.5" rx="1.1" fill="#0d8397"/>
<rect x="705.36" y="126.55" width="14.6" height="10.5" rx="1.1" fill="#0d8397"/>
<rect x="705.91" y="137.85" width="13.5" height="9.9" rx="1.5" fill="none" stroke="#9b9b9b" stroke-width="1.1"/>
<rect x="705.36" y="148.55" width="14.6" height="10.5" rx="1.1" fill="#0d8397"/>
<rect x="705.36" y="170.55" width="14.6" height="10.5" rx="1.1" fill="#0d8397"/>
<rect x="705.36" y="181.55" width="14.6" height="10.5" rx="1.1" fill="#0d8397"/>
<rect x="705.91" y="192.85" width="13.5" height="9.9" rx="1.5" fill="none" stroke="#9b9b9b" stroke-width="1.1"/>
<rect x="723.88" y="126.55" width="14.6" height="10.5" rx="1.1" fill="#0d8397"/>
<rect x="723.88" y="137.55" width="14.6" height="10.5" rx="1.1" fill="#0d8397"/>
<rect x="723.88" y="148.55" width="14.6" height="10.5" rx="1.1" fill="#0d8397"/>
<rect x="724.43" y="170.85" width="13.5" height="9.9" rx="1.5" fill="none" stroke="#9b9b9b" stroke-width="1.1"/>
<rect x="723.88" y="181.55" width="14.6" height="10.5" rx="1.1" fill="#0d8397"/>
<rect x="723.88" y="192.55" width="14.6" height="10.5" rx="1.1" fill="#0d8397"/>
<rect x="742.40" y="126.55" width="14.6" height="10.5" rx="1.1" fill="#0d8397"/>
<rect x="742.95" y="137.85" width="13.5" height="9.9" rx="1.5" fill="none" stroke="#9b9b9b" stroke-width="1.1"/>
<rect x="742.40" y="148.55" width="14.6" height="10.5" rx="1.1" fill="#0d8397"/>
<rect x="742.40" y="170.55" width="14.6" height="10.5" rx="1.1" fill="#0d8397"/>
<rect x="742.40" y="181.55" width="14.6" height="10.5" rx="1.1" fill="#0d8397"/>
<rect x="742.40" y="192.55" width="14.6" height="10.5" rx="1.1" fill="#0d8397"/>
<g fill="#f0f0f0"><rect x="274.5" y="96.4" width="15" height="9.4" rx="1.5"/></g>
<rect x="279.4" y="94.5" width="5.1" height="2.6" rx="1" fill="none" stroke="#f0f0f0" stroke-width="1.2"/>
<path d="M274.5,99.10000000000001 L282.0,101.10000000000001 L289.5,99.10000000000001" stroke="#10131a" stroke-width="0.9" fill="none"/>
<rect x="296" y="95" width="92" height="11.5" rx="0.8" fill="#202329"/>
<rect x="296" y="95" width="27" height="11.5" rx="2" fill="#0ec6e3"/>
<path d="M318.3,87.5 H328.3 L323.3,93.3 Z" fill="#f4f4f4" stroke="#f4f4f4" stroke-width="1.2" stroke-linejoin="round"/>
<g fill="#f0f0f0"><rect x="581.3" y="95.4" width="15.3" height="10.3" rx="1.5"/></g>
<rect x="586.3" y="93.5" width="5.2" height="2.6" rx="1" fill="none" stroke="#f0f0f0" stroke-width="1.2"/>
<path d="M581.3,98.10000000000001 L588.9,100.10000000000001 L596.5999999999999,98.10000000000001" stroke="#10131a" stroke-width="0.9" fill="none"/>
<rect x="602.8" y="94.9" width="57.7" height="11.6" rx="0.8" fill="#202329"/>
<rect x="602.8" y="94.9" width="17.4" height="11.6" rx="2" fill="#0ec6e3"/>
<path d="M615.4,87.5 H625.4 L620.4,93.4 Z" fill="#f4f4f4" stroke="#f4f4f4" stroke-width="1.2" stroke-linejoin="round"/>
<rect x="672.1" y="94.7" width="58.2" height="11.9" rx="0.8" fill="#202329"/>
<path d="M684.6,87.6 H694.6 L689.6,93.6 Z" fill="#f4f4f4" stroke="#f4f4f4" stroke-width="1.2" stroke-linejoin="round"/>
<rect x="741.3" y="94.7" width="57.6" height="11.9" rx="0.8" fill="#202329"/>
<path d="M753.2,87.6 H763.2 L758.2,93.6 Z" fill="#f4f4f4" stroke="#f4f4f4" stroke-width="1.2" stroke-linejoin="round"/>
<rect x="203.4" y="109.5" width="140.1" height="121.9" fill="none" stroke="#c8101a" stroke-width="3.2"/>
<rect x="84.9" y="287.3" width="357.6" height="233.9" rx="3" fill="none" stroke="#2e3138" stroke-width="1"/>
<text x="221.3" y="314.1" font-family="'Liberation Sans', sans-serif" font-size="12.4" font-weight="normal" fill="#e8e8e8" stroke="#e8e8e8" stroke-width="0.55" text-anchor="start" textLength="41.7" lengthAdjust="spacingAndGlyphs" >Planned</text>
<text x="368.1" y="314.1" font-family="'Liberation Sans', sans-serif" font-size="12.4" font-weight="normal" fill="#e8e8e8" stroke="#e8e8e8" stroke-width="0.55" text-anchor="start" textLength="37.9" lengthAdjust="spacingAndGlyphs" >Current</text>
<rect x="94.2" y="321.9" width="338.9" height="1.3" fill="#b9bbbe"/>
<text x="103.8" y="349.9" font-family="'Liberation Sans', sans-serif" font-size="12.6" font-weight="normal" fill="#cfd0d2" stroke="#cfd0d2" stroke-width="0.15" text-anchor="start" textLength="58.1" lengthAdjust="spacingAndGlyphs" >Passengers</text>
<text x="103.8" y="386.8" font-family="'Liberation Sans', sans-serif" font-size="12.6" font-weight="normal" fill="#cfd0d2" stroke="#cfd0d2" stroke-width="0.15" text-anchor="start" textLength="30.4" lengthAdjust="spacingAndGlyphs" >Cargo</text>
<text x="103.9" y="424.0" font-family="'Liberation Sans', sans-serif" font-size="12.6" font-weight="normal" fill="#cfd0d2" stroke="#cfd0d2" stroke-width="0.15" text-anchor="start" textLength="22.8" lengthAdjust="spacingAndGlyphs" >ZFW</text>
<rect x="221.3" y="332.2" width="101.3" height="26.8" rx="3.5" fill="#2a2d35"/>
<rect x="221.3" y="368.8" width="101.3" height="26.8" rx="3.5" fill="#2a2d35"/>
<rect x="221.3" y="405.7" width="101.3" height="26.8" rx="3.5" fill="#2a2d35"/>
<text transform="translate(229.4 350.4) scale(1 1.18)" x="0" y="0" font-family="'Liberation Mono', monospace" font-size="13.2" font-weight="normal" fill="#eeeeee" stroke="#eeeeee" stroke-width="0.3" text-anchor="start" textLength="23.9" lengthAdjust="spacingAndGlyphs" >139</text>
<text transform="translate(292.0 350.4) scale(1 1.18)" x="0" y="0" font-family="'Liberation Mono', monospace" font-size="13.2" font-weight="normal" fill="#8d9096" stroke="#8d9096" stroke-width="0.15" text-anchor="start" textLength="23.0" lengthAdjust="spacingAndGlyphs" >PAX</text>
<text transform="translate(229.4 387.2) scale(1 1.18)" x="0" y="0" font-family="'Liberation Mono', monospace" font-size="13.2" font-weight="normal" fill="#eeeeee" stroke="#eeeeee" stroke-width="0.3" text-anchor="start" textLength="31.8" lengthAdjust="spacingAndGlyphs" >2780</text>
<text transform="translate(292.0 387.2) scale(1 1.18)" x="0" y="0" font-family="'Liberation Mono', monospace" font-size="13.2" font-weight="normal" fill="#8d9096" stroke="#8d9096" stroke-width="0.15" text-anchor="start" textLength="23.3" lengthAdjust="spacingAndGlyphs" >KGS</text>
<text transform="translate(229.4 424.2) scale(1 1.18)" x="0" y="0" font-family="'Liberation Mono', monospace" font-size="13.2" font-weight="normal" fill="#eeeeee" stroke="#eeeeee" stroke-width="0.3" text-anchor="start" textLength="39.7" lengthAdjust="spacingAndGlyphs" >56956</text>
<text transform="translate(292.0 424.2) scale(1 1.18)" x="0" y="0" font-family="'Liberation Mono', monospace" font-size="13.2" font-weight="normal" fill="#8d9096" stroke="#8d9096" stroke-width="0.15" text-anchor="start" textLength="23.3" lengthAdjust="spacingAndGlyphs" >KGS</text>
<text transform="translate(370.8 350.4) scale(1 1.18)" x="0" y="0" font-family="'Liberation Mono', monospace" font-size="13.2" font-weight="normal" fill="#eeeeee" stroke="#eeeeee" stroke-width="0.3" text-anchor="start" textLength="23.4" lengthAdjust="spacingAndGlyphs" ><tspan fill="#9fa2a6">0</tspan>30</text>
<text transform="translate(399.9 350.4) scale(1 1.18)" x="0" y="0" font-family="'Liberation Mono', monospace" font-size="13.2" font-weight="normal" fill="#8d9096" stroke="#8d9096" stroke-width="0.15" text-anchor="start" textLength="23.1" lengthAdjust="spacingAndGlyphs" >PAX</text>
<text transform="translate(368.7 387.2) scale(1 1.18)" x="0" y="0" font-family="'Liberation Mono', monospace" font-size="13.2" font-weight="normal" fill="#eeeeee" stroke="#eeeeee" stroke-width="0.3" text-anchor="start" textLength="39.5" lengthAdjust="spacingAndGlyphs" ><tspan fill="#9fa2a6">0</tspan>1777</text>
<text transform="translate(413.9 387.2) scale(1 1.18)" x="0" y="0" font-family="'Liberation Mono', monospace" font-size="13.2" font-weight="normal" fill="#8d9096" stroke="#8d9096" stroke-width="0.15" text-anchor="start" textLength="22.8" lengthAdjust="spacingAndGlyphs" >KGS</text>
<text transform="translate(368.7 424.0) scale(1 1.18)" x="0" y="0" font-family="'Liberation Mono', monospace" font-size="13.2" font-weight="normal" fill="#eeeeee" stroke="#eeeeee" stroke-width="0.3" text-anchor="start" textLength="39.5" lengthAdjust="spacingAndGlyphs" >46797</text>
<text transform="translate(413.9 424.0) scale(1 1.18)" x="0" y="0" font-family="'Liberation Mono', monospace" font-size="13.2" font-weight="normal" fill="#8d9096" stroke="#8d9096" stroke-width="0.15" text-anchor="start" textLength="22.8" lengthAdjust="spacingAndGlyphs" >KGS</text>
<text x="103.9" y="460.9" font-family="'Liberation Sans', sans-serif" font-size="12.6" font-weight="normal" fill="#cfd0d2" stroke="#cfd0d2" stroke-width="0.15" text-anchor="start" textLength="38" lengthAdjust="spacingAndGlyphs" >ZFWCG</text>
<rect x="175" y="447.8" width="28.2" height="17.4" rx="3" fill="#0ec6e3"/>
<g fill="none" stroke="#0b2f3a" stroke-width="1.4" stroke-linecap="round" stroke-linejoin="round"><path d="M182,452.5 H184.5 C188,452.5 190,460.5 193.5,460.5 H197"/><path d="M182,460.5 H184.5 C188,460.5 190,452.5 193.5,452.5 H197"/><path d="M195,450.5 L197.2,452.5 L195,454.5"/><path d="M195,458.5 L197.2,460.5 L195,462.5"/></g>
<text transform="translate(229.6 460.8) scale(1 1.18)" x="0" y="0" font-family="'Liberation Mono', monospace" font-size="13.2" font-weight="normal" fill="#eeeeee" stroke="#eeeeee" stroke-width="0.3" text-anchor="start" textLength="39.1" lengthAdjust="spacingAndGlyphs" >33.46</text>
<text transform="translate(274.0 460.8) scale(1 1.18)" x="0" y="0" font-family="'Liberation Mono', monospace" font-size="13.2" font-weight="normal" fill="#8d9096" stroke="#8d9096" stroke-width="0.15" text-anchor="start" textLength="8.7" lengthAdjust="spacingAndGlyphs" >%</text>
<text transform="translate(369.7 460.9) scale(1 1.18)" x="0" y="0" font-family="'Liberation Mono', monospace" font-size="13.2" font-weight="normal" fill="#eeeeee" stroke="#eeeeee" stroke-width="0.3" text-anchor="start" textLength="39.2" lengthAdjust="spacingAndGlyphs" >16.41</text>
<text transform="translate(413.9 460.9) scale(1 1.18)" x="0" y="0" font-family="'Liberation Mono', monospace" font-size="13.2" font-weight="normal" fill="#8d9096" stroke="#8d9096" stroke-width="0.15" text-anchor="start" textLength="8.4" lengthAdjust="spacingAndGlyphs" >%</text>
<rect x="94.2" y="473.9" width="338.4" height="1" fill="#2c2f36"/>
<g fill="#f0f0f0"><circle cx="108.4" cy="495.2" r="3.3"/><path d="M102.6,504 Q102.6,499.3 108.4,499.3 Q114.3,499.3 114.3,504 Z"/></g>
<rect x="122.5" y="485.7" width="55.7" height="25.5" rx="3.5" fill="#2a2d35"/>
<text x="130.5" y="502.2" font-family="'Liberation Sans', sans-serif" font-size="11.5" font-weight="normal" fill="#aeb0b3" stroke="#aeb0b3" stroke-width="0.15" text-anchor="start" textLength="12.1" lengthAdjust="spacingAndGlyphs" >84</text>
<text x="151.6" y="502.2" font-family="'Liberation Sans', sans-serif" font-size="11.5" font-weight="normal" fill="#86898e" stroke="#86898e" stroke-width="0.1" text-anchor="start" textLength="19.4" lengthAdjust="spacingAndGlyphs" >KGS</text>
<g fill="#f0f0f0"><rect x="184.3" y="493.8" width="15.7" height="10.1" rx="1.5"/></g>
<rect x="189.5" y="491.90000000000003" width="5.3" height="2.6" rx="1" fill="none" stroke="#f0f0f0" stroke-width="1.2"/>
<path d="M184.3,496.5 L192.2,498.5 L200.0,496.5" stroke="#10131a" stroke-width="0.9" fill="none"/>
<rect x="206" y="485.7" width="55.3" height="25.5" rx="3.5" fill="#2a2d35"/>
<text x="213.8" y="502.2" font-family="'Liberation Sans', sans-serif" font-size="11.5" font-weight="normal" fill="#aeb0b3" stroke="#aeb0b3" stroke-width="0.15" text-anchor="start" textLength="12.1" lengthAdjust="spacingAndGlyphs" >20</text>
<text x="235.1" y="502.2" font-family="'Liberation Sans', sans-serif" font-size="11.5" font-weight="normal" fill="#86898e" stroke="#86898e" stroke-width="0.1" text-anchor="start" textLength="19.4" lengthAdjust="spacingAndGlyphs" >KGS</text>
<rect x="338.1" y="484.5" width="55.1" height="27.7" rx="3" fill="#2bc15a"/>
<circle cx="365.6" cy="498.2" r="6.5" fill="none" stroke="#10131a" stroke-width="5.4"/>
<rect x="395.9" y="484.5" width="36.7" height="27.7" rx="3" fill="#0ec6e3"/>
<g fill="none" stroke="#17abc4" stroke-width="1.1" stroke-linejoin="round"><path d="M416.5,494.5 V491.8 H405.8 V505 H416.5 V501.5"/><path d="M411,497.9 H422.5 M419,494.2 L422.8,497.9 L419,501.6"/></g>
<rect x="84.9" y="532.2" width="357.6" height="46.1" rx="3" fill="none" stroke="#2e3138" stroke-width="1"/>
<text x="94.8" y="559.9" font-family="'Liberation Sans', sans-serif" font-size="12.6" font-weight="normal" fill="#e3e3e3" stroke="#e3e3e3" stroke-width="0.3" text-anchor="start" textLength="74.1" lengthAdjust="spacingAndGlyphs" >Boarding Time</text>
<text x="174.1" y="559.0" font-family="'Liberation Sans', sans-serif" font-size="9" font-weight="normal" fill="#d0d0d0" text-anchor="start" textLength="50.8" lengthAdjust="spacingAndGlyphs" >(2:49 minutes)</text>
<rect x="266.8" y="542.8" width="165.2" height="25.1" rx="3" fill="none" stroke="#2e3138" stroke-width="1"/>
<rect x="331" y="542.3" width="50.8" height="26" fill="#0ec6e3"/>
<text x="281.4" y="559.5" font-family="'Liberation Sans', sans-serif" font-size="12.2" font-weight="normal" fill="#e3e3e3" stroke="#e3e3e3" stroke-width="0.3" text-anchor="start" textLength="35" lengthAdjust="spacingAndGlyphs" >Instant</text>
<text x="343.5" y="559.5" font-family="'Liberation Sans', sans-serif" font-size="12.2" font-weight="normal" fill="#1b6676" stroke="#1b6676" stroke-width="0.3" text-anchor="start" textLength="25" lengthAdjust="spacingAndGlyphs" >Fast</text>
<text x="396.2" y="559.5" font-family="'Liberation Sans', sans-serif" font-size="12.2" font-weight="normal" fill="#e3e3e3" stroke="#e3e3e3" stroke-width="0.3" text-anchor="start" textLength="21.7" lengthAdjust="spacingAndGlyphs" >Real</text>
<rect x="498.7" y="287.1" width="302.7" height="294.7" fill="none" stroke="#2d3037" stroke-width="1"/>
<line x1="498.7" y1="319.84" x2="801.4" y2="319.84" stroke="#2d3037" stroke-width="1"/>
<line x1="498.7" y1="352.59" x2="801.4" y2="352.59" stroke="#2d3037" stroke-width="1"/>
<line x1="498.7" y1="385.33" x2="801.4" y2="385.33" stroke="#2d3037" stroke-width="1"/>
<line x1="498.7" y1="418.08" x2="801.4" y2="418.08" stroke="#2d3037" stroke-width="1"/>
<line x1="498.7" y1="450.82" x2="801.4" y2="450.82" stroke="#2d3037" stroke-width="1"/>
<line x1="498.7" y1="483.57" x2="801.4" y2="483.57" stroke="#2d3037" stroke-width="1"/>
<line x1="498.7" y1="516.31" x2="801.4" y2="516.31" stroke="#2d3037" stroke-width="1"/>
<line x1="498.7" y1="549.06" x2="801.4" y2="549.06" stroke="#2d3037" stroke-width="1"/>
<clipPath id="pc"><rect x="498.7" y="287.1" width="302.7" height="294.7"/></clipPath>
<g clip-path="url(#pc)" stroke="#2d3037" stroke-width="1"><line x1="523.2" y1="287.1" x2="570.0" y2="581.8"/><line x1="574.7" y1="287.1" x2="600.4" y2="581.8"/><line x1="626.2" y1="287.1" x2="630.7" y2="581.8"/><line x1="677.7" y1="287.1" x2="661.1" y2="581.8"/><line x1="729.2" y1="287.1" x2="691.5" y2="581.8"/><line x1="780.7" y1="287.1" x2="721.9" y2="581.8"/><line x1="832.2" y1="287.1" x2="752.2" y2="581.8"/></g>
<text transform="translate(471.9 294.4) scale(1 1.16)" x="0" y="0" font-family="'Liberation Mono', monospace" font-size="12" font-weight="normal" fill="#c9cacc" stroke="#c9cacc" stroke-width="0.2" text-anchor="start" textLength="13.8" lengthAdjust="spacingAndGlyphs" >80</text>
<text transform="translate(471.9 359.15) scale(1 1.16)" x="0" y="0" font-family="'Liberation Mono', monospace" font-size="12" font-weight="normal" fill="#c9cacc" stroke="#c9cacc" stroke-width="0.2" text-anchor="start" textLength="13.8" lengthAdjust="spacingAndGlyphs" >70</text>
<text transform="translate(471.9 423.9) scale(1 1.16)" x="0" y="0" font-family="'Liberation Mono', monospace" font-size="12" font-weight="normal" fill="#c9cacc" stroke="#c9cacc" stroke-width="0.2" text-anchor="start" textLength="13.8" lengthAdjust="spacingAndGlyphs" >60</text>
<text transform="translate(471.9 488.65) scale(1 1.16)" x="0" y="0" font-family="'Liberation Mono', monospace" font-size="12" font-weight="normal" fill="#c9cacc" stroke="#c9cacc" stroke-width="0.2" text-anchor="start" textLength="13.8" lengthAdjust="spacingAndGlyphs" >50</text>
<text transform="translate(471.9 553.4) scale(1 1.16)" x="0" y="0" font-family="'Liberation Mono', monospace" font-size="12" font-weight="normal" fill="#c9cacc" stroke="#c9cacc" stroke-width="0.2" text-anchor="start" textLength="13.8" lengthAdjust="spacingAndGlyphs" >40</text>
<text transform="translate(505.15 276.6) scale(1 1.1)" x="0" y="0" font-family="'Liberation Mono', monospace" font-size="12" font-weight="normal" fill="#c9cacc" stroke="#c9cacc" stroke-width="0.2" text-anchor="start" textLength="20.7" lengthAdjust="spacingAndGlyphs" >15%</text>
<text transform="translate(559.6999999999999 276.6) scale(1 1.1)" x="0" y="0" font-family="'Liberation Mono', monospace" font-size="12" font-weight="normal" fill="#c9cacc" stroke="#c9cacc" stroke-width="0.2" text-anchor="start" textLength="20.7" lengthAdjust="spacingAndGlyphs" >20%</text>
<text transform="translate(614.25 276.6) scale(1 1.1)" x="0" y="0" font-family="'Liberation Mono', monospace" font-size="12" font-weight="normal" fill="#c9cacc" stroke="#c9cacc" stroke-width="0.2" text-anchor="start" textLength="20.7" lengthAdjust="spacingAndGlyphs" >25%</text>
<text transform="translate(668.8 276.6) scale(1 1.1)" x="0" y="0" font-family="'Liberation Mono', monospace" font-size="12" font-weight="normal" fill="#c9cacc" stroke="#c9cacc" stroke-width="0.2" text-anchor="start" textLength="20.7" lengthAdjust="spacingAndGlyphs" >30%</text>
<text transform="translate(723.35 276.6) scale(1 1.1)" x="0" y="0" font-family="'Liberation Mono', monospace" font-size="12" font-weight="normal" fill="#c9cacc" stroke="#c9cacc" stroke-width="0.2" text-anchor="start" textLength="20.7" lengthAdjust="spacingAndGlyphs" >35%</text>
<text transform="translate(777.9 276.6) scale(1 1.1)" x="0" y="0" font-family="'Liberation Mono', monospace" font-size="12" font-weight="normal" fill="#c9cacc" stroke="#c9cacc" stroke-width="0.2" text-anchor="start" textLength="20.7" lengthAdjust="spacingAndGlyphs" >40%</text>
<text transform="translate(447.7 575.3) scale(1 1.1)" x="0" y="0" font-family="'Liberation Mono', monospace" font-size="8.2" font-weight="normal" fill="#c9cacc" stroke="#c9cacc" stroke-width="0.2" text-anchor="start" textLength="45.9" lengthAdjust="spacingAndGlyphs" >x 1000 kgs</text>
<path d="M561.8,532.4 L551.2,462.6 L558.6,398 L550.6,339.4 L646.6,293.2 L738.7,293.5 L772.2,329.5 L764.5,368.8 L718.6,483.5 L684.3,532.4" fill="none" stroke="#0ec6e3" stroke-width="2.6" stroke-linejoin="miter"/>
<line x1="561.8" y1="532.4" x2="698.6" y2="532.4" stroke="#d0d0d0" stroke-width="1.8"/>
<line x1="698.6" y1="532.4" x2="700.8" y2="512" stroke="#8cc63f" stroke-width="1.8"/>
<line x1="556.3" y1="369.5" x2="764.5" y2="369.5" stroke="#8cc63f" stroke-width="2"/>
<line x1="558.6" y1="389.8" x2="755.5" y2="389.8" stroke="#d8d8d8" stroke-width="1.8"/>
<text transform="translate(696 305.1) scale(1 1.12)" x="0" y="0" font-family="'Liberation Mono', monospace" font-size="11.5" font-weight="normal" fill="#1597ad" stroke="#1597ad" stroke-width="0.2" text-anchor="start" textLength="27" lengthAdjust="spacingAndGlyphs" >MTOW</text>
<text transform="translate(696 364.4) scale(1 1.12)" x="0" y="0" font-family="'Liberation Mono', monospace" font-size="11.5" font-weight="normal" fill="#d4d4d4" stroke="#d4d4d4" stroke-width="0.2" text-anchor="start" textLength="27" lengthAdjust="spacingAndGlyphs" >MLDW</text>
<text transform="translate(696 385.3) scale(1 1.12)" x="0" y="0" font-family="'Liberation Mono', monospace" font-size="11.5" font-weight="normal" fill="#d4d4d4" stroke="#d4d4d4" stroke-width="0.2" text-anchor="start" textLength="27" lengthAdjust="spacingAndGlyphs" >MZFW</text>
<rect x="576.9" y="476" width="6.8" height="6.8" transform="rotate(45 580.3 479.4)" fill="#0ec6e3"/>
<rect x="563.8" y="501.3" width="6.8" height="6.8" transform="rotate(45 567.2 504.7)" fill="#f4f4f4"/>
</svg>
</body></html>
